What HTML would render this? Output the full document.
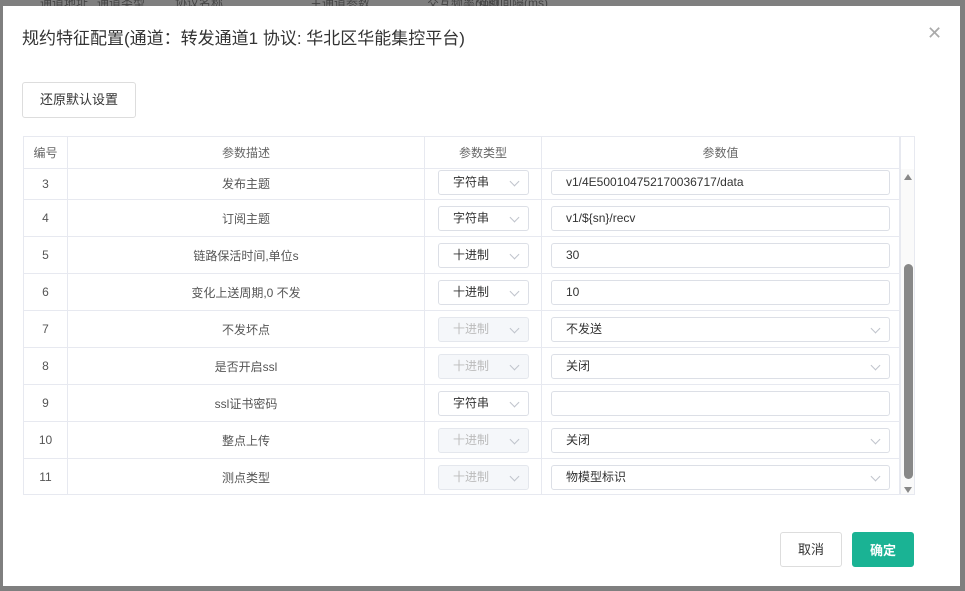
<!DOCTYPE html>
<html><head><meta charset="utf-8"><style>
*{box-sizing:border-box;margin:0;padding:0}
body{width:965px;height:591px;background:#7f7f7f;position:relative;overflow:hidden;font-family:"Liberation Sans","Noto Sans CJK SC",sans-serif;color:#555}
.bgh{position:absolute;top:-6px;font-size:12px;color:#444}
.modal{position:absolute;left:3px;top:6px;width:957px;height:580px;background:#fff}
.title{position:absolute;left:19px;top:18px;font-size:17px;color:#333}
.close{position:absolute;left:924px;top:17px;font-size:18px;color:#aaa}
.btn{position:absolute;border:1px solid #ddd;border-radius:3px;background:#fff;font-size:13px;color:#333;text-align:center}
.tbl{position:absolute;left:20px;top:130px;width:892px;height:359px;border:1px solid #e7e9f0;overflow:hidden}
.row{position:absolute;left:0;width:876px;border-bottom:1px solid #e7e9f0;font-size:12px}
.c{position:absolute;top:0;height:100%;border-right:1px solid #e7e9f0;display:flex;align-items:center;justify-content:center}
.sel{position:absolute;left:414px;width:91px;height:25px;border:1px solid #dcdfe6;border-radius:3px;font-size:12px;color:#333;padding-left:14px;line-height:23px}
.sel.d{background:#f5f7fa;color:#bbb;border-color:#e4e7ed}
.sel i,.inp i{position:absolute;right:10px;top:7px;width:7px;height:7px;border-right:1px solid #c0c4cc;border-bottom:1px solid #c0c4cc;transform:rotate(45deg)}
.inp{position:absolute;left:527px;width:339px;height:25px;border:1px solid #dcdfe6;border-radius:3px;font-size:12px;color:#333;padding-left:14px;line-height:23px}
</style></head><body>
<div class="bgh" style="left:40px">通道地址</div><div class="bgh" style="left:97px">通道类型</div><div class="bgh" style="left:175px">协议名称</div><div class="bgh" style="left:310px">主通道参数</div><div class="bgh" style="left:427px">交互频率(ms)</div><div class="bgh" style="left:476px">匁帧间隔(ms)</div>
<div class="modal">
<div class="title">规约特征配置(通道：转发通道1 协议: 华北区华能集控平台)</div>
<div class="close">✕</div>
<div class="btn" style="left:19px;top:76px;width:114px;height:36px;line-height:34px">还原默认设置</div>
<div class="tbl">
<div class="row" style="top:0;height:32px;color:#666"><div class="c" style="left:0;width:44px">编号</div><div class="c" style="left:44px;width:357px">参数描述</div><div class="c" style="left:401px;width:117px">参数类型</div><div class="c" style="left:518px;width:358px">参数值</div></div>
<div id="rows"></div>
<div style="position:absolute;left:876px;top:0;width:1px;height:359px;background:#e7e9f0"></div>
<div style="position:absolute;left:877px;top:32px;width:14px;height:327px;background:#fafafa"></div>
<div style="position:absolute;left:880px;top:127px;width:9px;height:215px;background:#888;border-radius:5px"></div>
<div style="position:absolute;left:880px;top:37px;width:0;height:0;border-left:4.5px solid transparent;border-right:4.5px solid transparent;border-bottom:6px solid #888"></div>
<div style="position:absolute;left:880px;top:350px;width:0;height:0;border-left:4.5px solid transparent;border-right:4.5px solid transparent;border-top:6px solid #888"></div>
</div>
<div class="btn" style="left:777px;top:526px;width:62px;height:35px;line-height:33px">取消</div>
<div class="btn" style="left:849px;top:526px;width:62px;height:35px;line-height:35px;background:#1ab394;border-color:#1ab394;color:#fff;font-weight:bold">确定</div>
</div>
<script>
var d=[["3","发布主题","字符串",0,"v1/4E500104752170036717/data",0],["4","订阅主题","字符串",0,"v1/${sn}/recv",0],["5","链路保活时间,单位s","十进制",0,"30",0],["6","变化上送周期,0 不发","十进制",0,"10",0],["7","不发坏点","十进制",1,"不发送",1],["8","是否开启ssl","十进制",1,"关闭",1],["9","ssl证书密码","字符串",0,"",0],["10","整点上传","十进制",1,"关闭",1],["11","测点类型","十进制",1,"物模型标识",1]];
var h="",t=31;
d.forEach(function(r,i){var H=i==0?32:37;var top=i==0?t:t;var o=i==0?-2:0;
h+='<div class="row" style="top:'+t+'px;height:'+H+'px"><div class="c" style="left:0;width:44px">'+r[0]+'</div><div class="c" style="left:44px;width:357px">'+r[1]+'</div><div class="c" style="left:401px;width:117px"></div><div class="c" style="left:518px;width:358px"></div>'+
'<div class="sel'+(r[3]?' d':'')+'" style="top:'+(H/2-12.5+o)+'px">'+r[2]+'<i></i></div><div class="inp" style="top:'+(H/2-12.5+o)+'px">'+r[4]+(r[5]?'<i></i>':'')+'</div></div>';t+=H;});
document.getElementById("rows").innerHTML=h;
</script>
</body></html>
